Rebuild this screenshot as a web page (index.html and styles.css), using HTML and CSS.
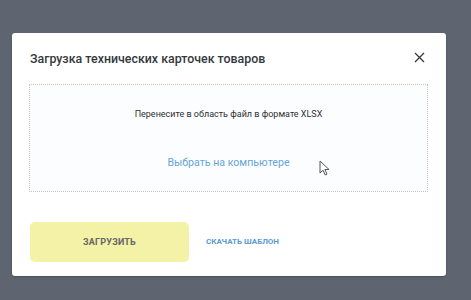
FILE: index.html
```html
<!DOCTYPE html>
<html lang="ru">
<head>
    <meta charset="UTF-8">
    <title>Загрузка технических карточек товаров</title>
    <link rel="stylesheet" href="styles.css">
</head>
<body>
    <div class="modal">
        <div class="modal-header">
            <h2>Загрузка технических карточек товаров</h2>
            <button class="close" aria-label="Закрыть">
                <svg width="11" height="11" viewBox="0 0 11 11">
                    <path d="M1 1L10 10M10 1L1 10" stroke="#3a3d42" stroke-width="1.4" fill="none"/>
                </svg>
            </button>
        </div>

        <div class="dropzone">
            <p class="hint">Перенесите в область файл в формате XLSX</p>
            <a class="pick" href="#">Выбрать на компьютере</a>
            <svg class="cursor" width="12" height="16" viewBox="0 0 12 16">
                <path d="M1 1L1 13L4 10.2L6.2 15L8 14.2L5.9 9.5L10 9.5Z" fill="#fff" stroke="#555" stroke-width="1"/>
            </svg>
        </div>

        <div class="modal-footer">
            <button class="upload">ЗАГРУЗИТЬ</button>
            <a class="template" href="#">СКАЧАТЬ ШАБЛОН</a>
        </div>
    </div>
</body>
</html>
```

FILE: styles.css
```css
body, html {
    margin: 0;
    height: 100%;
    font-family: 'Roboto', 'Inter', sans-serif;
    background-color: #5f6570;
}
body {
    padding: 33px 0 0 12px;
    box-sizing: border-box;
}
.modal {
    width: 434px;
    height: 243px;
    background-color: #fff;
    border-radius: 3px;
    padding: 0 18px 0 17px;
    box-sizing: border-box;
    box-shadow: 0 1px 2px rgba(0, 0, 0, 0.25);
}
.modal-header {
    display: flex;
    align-items: center;
    justify-content: space-between;
    height: 51px;
}
.modal-header h2 {
    margin: 0 0 1px 1px;
    font-size: 12.4px;
    font-weight: 500;
    color: #35383d;
}
.close {
    border: none;
    background: none;
    padding: 0;
    margin: 0 3px 2px 0;
    display: flex;
    cursor: pointer;
}
.dropzone {
    position: relative;
    height: 108px;
    border: 1px dotted #cdc3c3;
    background-color: #fcfdfe;
    display: flex;
    flex-direction: column;
    align-items: center;
    box-sizing: border-box;
}
.hint {
    margin: 24px 0 0;
    font-size: 9px;
    color: #2e3034;
}
.pick {
    margin-top: 37px;
    font-size: 10.6px;
    color: #67a5d6;
    text-decoration: none;
}
.cursor {
    position: absolute;
    left: 289px;
    top: 75px;
}
.modal-footer {
    display: flex;
    align-items: center;
    margin-top: 30px;
}
.upload {
    width: 159px;
    height: 40px;
    margin-left: 1px;
    border: none;
    border-radius: 5px;
    background-color: #f3f2a7;
    color: #666;
    font-family: inherit;
    font-size: 9px;
    font-weight: 700;
    letter-spacing: 0.2px;
    cursor: pointer;
}
.template {
    margin: 0 0 2px 17px;
    font-size: 8px;
    font-weight: 700;
    color: #5b9ad0;
    text-decoration: none;
}
```
